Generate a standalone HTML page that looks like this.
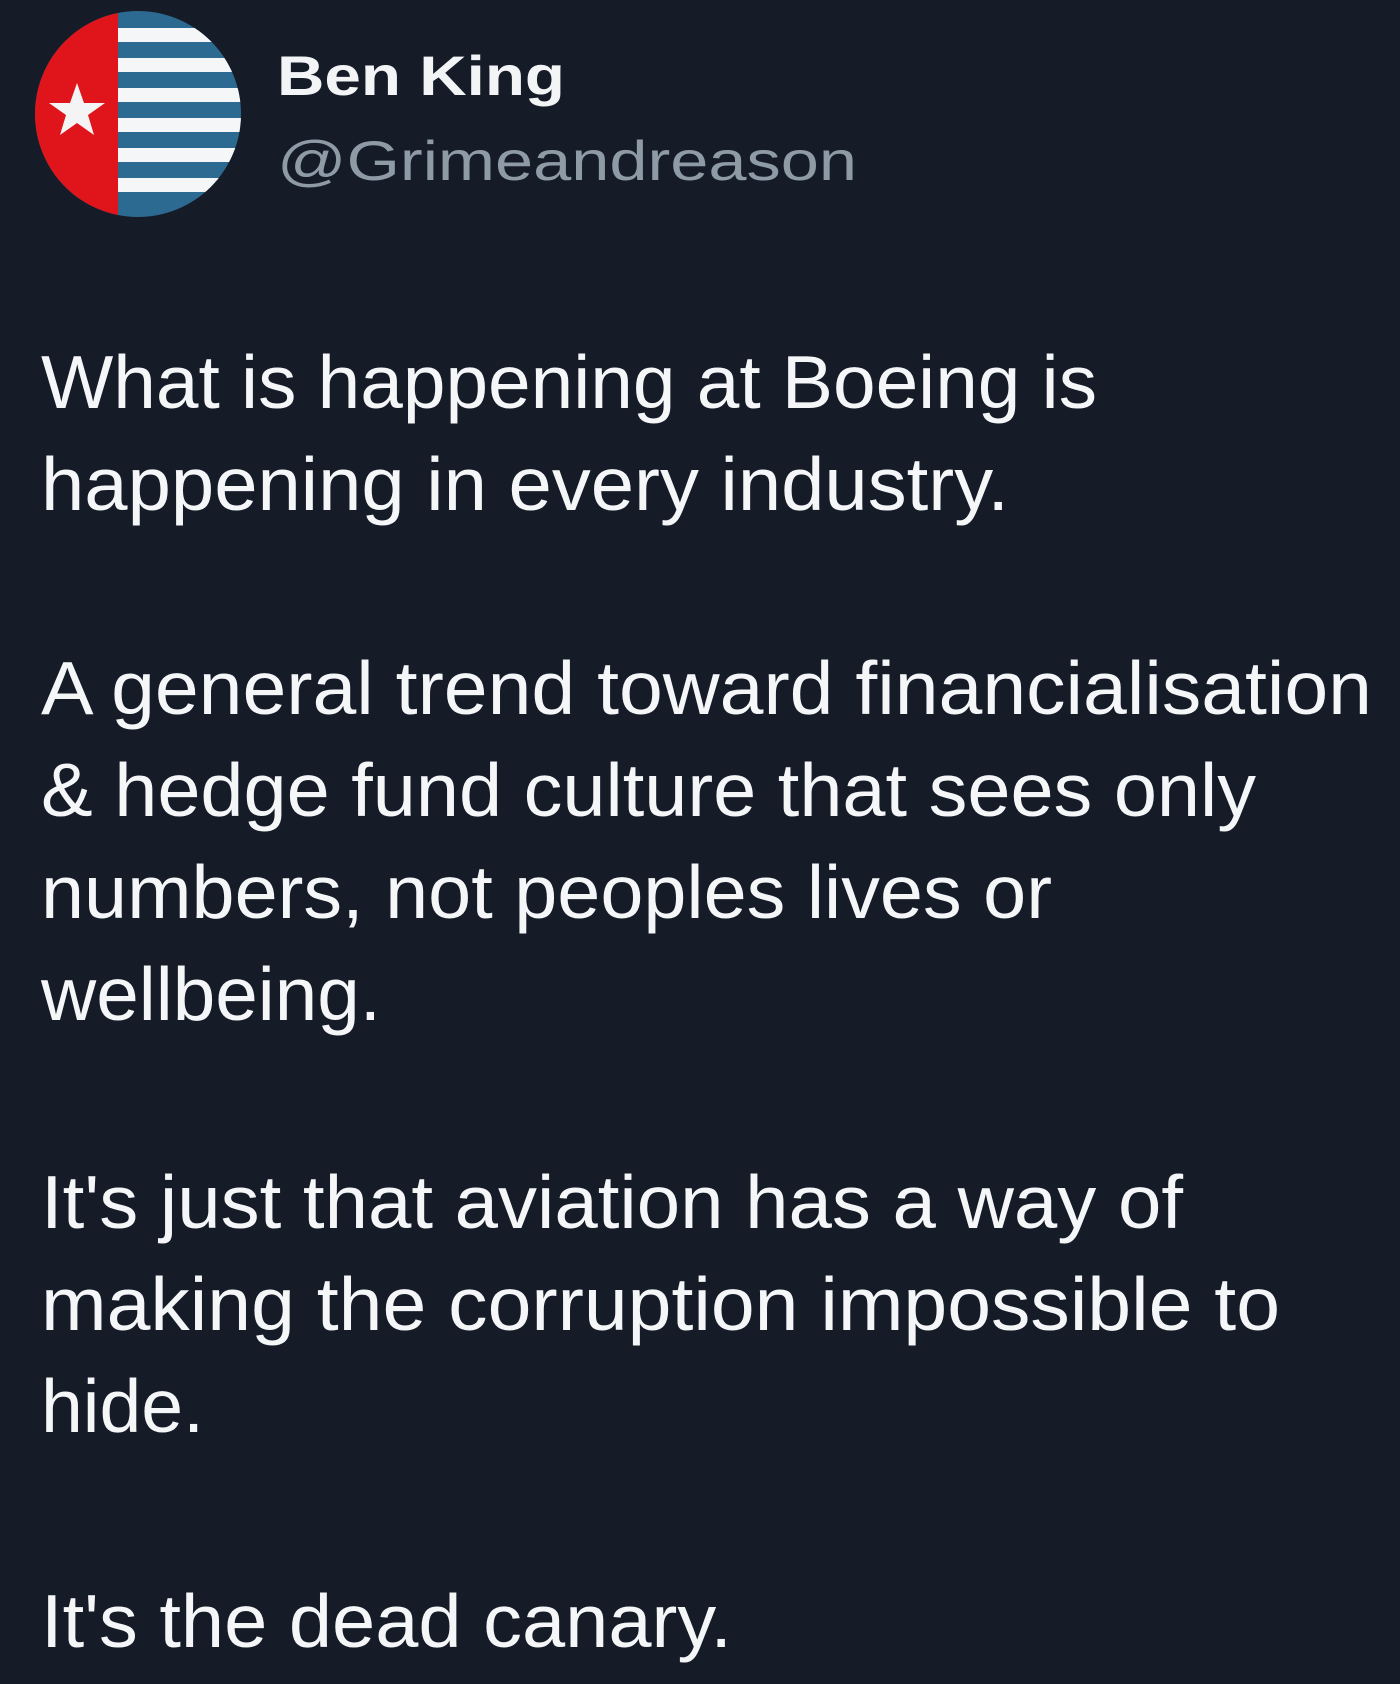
<!DOCTYPE html>
<html><head><meta charset="utf-8"><style>
html,body{margin:0;padding:0;background:#151c28;}
svg{display:block}
</style></head><body>
<svg width="1400" height="1684" viewBox="0 0 1400 1684" xmlns="http://www.w3.org/2000/svg">
<rect width="1400" height="1684" fill="#151c28"/>
<defs><clipPath id="c"><circle cx="138" cy="114" r="103"/></clipPath></defs>
<g clip-path="url(#c)">
<rect x="30" y="0" width="220" height="230" fill="#2d6a92"/>
<g fill="#f4f6f8">
<rect x="118" y="28" width="130" height="14"/>
<rect x="118" y="58" width="130" height="14"/>
<rect x="118" y="88" width="130" height="14"/>
<rect x="118" y="118" width="130" height="14"/>
<rect x="118" y="148" width="130" height="14"/>
<rect x="118" y="178" width="130" height="14"/>
</g>
<rect x="30" y="0" width="88" height="230" fill="#e0151b"/>
<polygon points="77,83 84,103 105,103 88,115 94,135 77,123 60,135 66,115 49,103 70,103" fill="#f4f4f4"/>
</g>
<g font-family="Liberation Sans, sans-serif">
<text x="277" y="95" font-size="56" font-weight="bold" fill="#f2f4f6" textLength="288" lengthAdjust="spacingAndGlyphs">Ben King</text>
<text x="277" y="180" font-size="56" fill="#8e9aa6" textLength="580" lengthAdjust="spacingAndGlyphs">@Grimeandreason</text>
<g font-size="75" fill="#f4f6f8" lengthAdjust="spacingAndGlyphs">
<text x="41" y="408" textLength="1056" lengthAdjust="spacingAndGlyphs">What is happening at Boeing is</text>
<text x="41" y="510" textLength="968" lengthAdjust="spacingAndGlyphs">happening in every industry.</text>
<text x="41" y="714" textLength="1331" lengthAdjust="spacingAndGlyphs">A general trend toward financialisation</text>
<text x="41" y="816" textLength="1215" lengthAdjust="spacingAndGlyphs">&amp; hedge fund culture that sees only</text>
<text x="41" y="918" textLength="1011" lengthAdjust="spacingAndGlyphs">numbers, not peoples lives or</text>
<text x="41" y="1020" textLength="340" lengthAdjust="spacingAndGlyphs">wellbeing.</text>
<text x="41" y="1228" textLength="1142" lengthAdjust="spacingAndGlyphs">It's just that aviation has a way of</text>
<text x="41" y="1330" textLength="1239" lengthAdjust="spacingAndGlyphs">making the corruption impossible to</text>
<text x="41" y="1432" textLength="163" lengthAdjust="spacingAndGlyphs">hide.</text>
<text x="41" y="1647" textLength="691" lengthAdjust="spacingAndGlyphs">It's the dead canary.</text>
</g>
</g>
</svg>
</body></html>
